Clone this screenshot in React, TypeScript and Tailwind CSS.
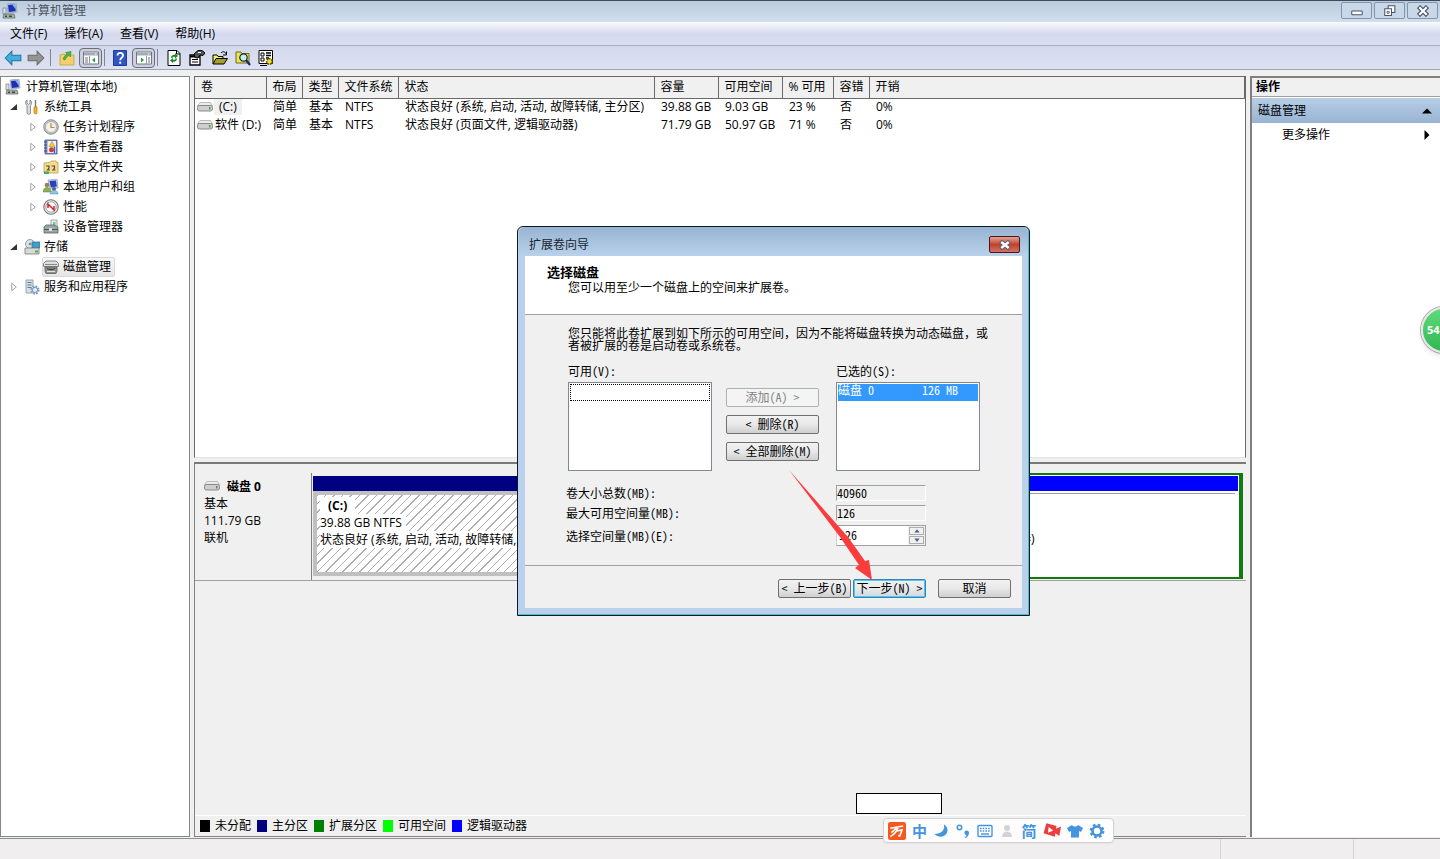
import { useState } from "react"
import type { ReactNode } from "react"

const Svg = ({ children, className = "size-4" }: { children: ReactNode, className?: string }) => (
  <svg viewBox="0 0 16 16" className={`shrink-0 ${className}`} aria-hidden="true">{children}</svg>
)

const ComputerIcon = () => (
  <Svg>
    <path d="M5 1l9-1 1 9-9 1z" fill="#c8d0dc" stroke="#8792a5" strokeWidth=".6" />
    <path d="M6 2l7-.8.8 7-7 .8z" fill="#1b2fb8" />
    <path d="M10 1.6l3-.3.7 5z" fill="#8fb4f4" />
    <path d="M1 5h3v6H1z" fill="#dfe4e8" stroke="#6b7680" strokeWidth=".7" />
    <path d="M2 11h10l1 4H1z" fill="#a9b4ae" stroke="#59635e" strokeWidth=".7" />
    <path d="M3 12.5h2v1.5H3zM7 12.5h3v1.5H7z" fill="#3f4a46" />
  </Svg>
)

const ToolsIcon = () => (
  <Svg>
    <path d="M3 1v3l1.5 1.5L6 4V1c2 1 2 4 .5 5.5V14a1.8 1.8 0 01-3.5 0V6.500C1 5 1 2 3 1z" fill="#d9dde0" stroke="#737a80" strokeWidth=".8" />
    <path d="M11.500 1v7" stroke="#777" strokeWidth="1.400" />
    <path d="M10 8h3v5.500a1.500 1.500 0 01-3 0z" fill="#f2b417" stroke="#b87f0a" strokeWidth=".7" />
  </Svg>
)

const ClockIcon = () => (
  <Svg>
    <circle cx="8" cy="8" r="7.300" fill="#bfc3c8" stroke="#7b7f85" strokeWidth=".8" />
    <circle cx="8" cy="8" r="5.500" fill="#f3f1e4" stroke="#9a9a94" strokeWidth=".6" />
    <path d="M8 4v4.500h3.500" stroke="#b08a50" strokeWidth="1.200" fill="none" />
  </Svg>
)

const EventIcon = () => (
  <Svg>
    <path d="M2 1h12v14H2z" fill="#7f90c4" stroke="#4b5788" strokeWidth=".8" />
    <path d="M4.500 2H13v12H4.500z" fill="#eef0fa" />
    <path d="M1 3h3M1 6h3M1 9h3M1 12h3" stroke="#444f78" />
    <path d="M9 2.500l3 5H6z" fill="#f5d31b" stroke="#a5860c" strokeWidth=".5" />
    <circle cx="8.500" cy="10.800" r="2.500" fill="#d33a3f" />
    <path d="M11.500 8v6" stroke="#4766bd" strokeWidth="1.500" />
  </Svg>
)

const SharedIcon = () => (
  <Svg>
    <path d="M1 4l6-.5L8 2h5l.5 1.500H15V14H1z" fill="#f6dc90" stroke="#c49a3d" strokeWidth=".8" />
    <path d="M3 7h3v2L4.500 11H7M8.500 7h3v2L10 11h2.500" fill="none" stroke="#4f4e38" strokeWidth="1.200" />
    <path d="M1 12.500h5V15H1z" fill="#48a85b" />
  </Svg>
)

const UsersIcon = () => (
  <Svg>
    <path d="M5 1l9-1 1 9-8 1z" fill="#cfd6e4" stroke="#8490ab" strokeWidth=".6" />
    <path d="M6.500 2l6.500-.5.8 6-6 1z" fill="#2540c0" />
    <circle cx="4" cy="6" r="2.300" fill="#9d8353" />
    <path d="M0 13c0-6 8-6 8 0z" fill="#8fae4f" stroke="#61793a" strokeWidth=".5" />
    <circle cx="11" cy="10" r="2" fill="#55627a" />
    <path d="M7 15c0-5 8-5 8 0z" fill="#8cc4e4" stroke="#5a8eaf" strokeWidth=".5" />
  </Svg>
)

const PerfIcon = () => (
  <Svg>
    <circle cx="8" cy="8" r="7.200" fill="#e9e9e9" stroke="#77797b" strokeWidth="1.100" />
    <circle cx="8" cy="8" r="5.200" fill="#fff" stroke="#8b8b8b" strokeWidth=".8" />
    <path d="M5 9V5l6 6V7" stroke="#d0202a" strokeWidth="1.500" fill="none" />
  </Svg>
)

const DeviceIcon = () => (
  <Svg>
    <path d="M8 1h6v8H8z" fill="#eef3ee" stroke="#7c857f" strokeWidth=".7" />
    <path d="M10 3h2.500v4H10z" fill="#7cc08a" />
    <path d="M1 8l2-2h8l4 2v6H1z" fill="#9aa5a6" stroke="#5b6667" strokeWidth=".8" />
    <path d="M1 10.500h14" stroke="#4f595a" />
    <path d="M6 9h3v3H6z" fill="#dce2e2" />
  </Svg>
)

const StorageIcon = () => (
  <Svg>
    <circle cx="6" cy="5" r="4.500" fill="#d8e3e6" stroke="#7e8c90" strokeWidth=".8" />
    <circle cx="6" cy="5" r="1.300" fill="#7e8c90" />
    <path d="M8 3h8v6H8z" fill="#3e9fcf" stroke="#2f6d8e" strokeWidth=".7" />
    <path d="M1 9h14v6H1z" fill="#d9d9d6" stroke="#777" strokeWidth=".8" />
    <path d="M11 11.500h3v2h-3z" fill="#46a95a" />
  </Svg>
)

const DiskMgmtIcon = () => (
  <Svg>
    <path d="M3 2h10l2.500 2.500v3H.5v-3z" fill="#dedede" stroke="#6c6c6c" strokeWidth=".8" />
    <path d="M2 8h12v4l-1 2.500H3L2 12z" fill="#8f918d" stroke="#5d5f5c" strokeWidth=".8" />
    <path d="M2 5.500h12" stroke="#8a8a8a" />
    <path d="M4 9.500c3 1.500 5 1.500 8 0" stroke="#3f413f" strokeWidth="1.300" fill="none" />
    <path d="M4 12.500h8" stroke="#e2e2e2" />
  </Svg>
)

const ServicesIcon = () => (
  <Svg>
    <path d="M2 1h7v13H2z" fill="#d6e0e8" stroke="#8294a4" strokeWidth=".8" />
    <path d="M3.500 3.500h4M3.500 6h4M3.500 8.500h4" stroke="#60788c" />
    <circle cx="11" cy="11" r="3.400" fill="#e6edf5" stroke="#7d9cbe" strokeWidth="2.400" strokeDasharray="1.600 1.070" />
    <circle cx="11" cy="11" r="2.600" fill="none" stroke="#7d9cbe" />
  </Svg>
)

const DriveIcon = () => (
  <Svg>
    <path d="M3 3.500h10.500L15.500 7H.500z" fill="#ececec" stroke="#a5a5a5" strokeWidth=".7" />
    <rect x=".5" y="6.500" width="15" height="5.500" rx="2" fill="#cfcfcf" stroke="#7f7f7f" strokeWidth=".9" />
    <path d="M12 8h1.500v2.500H12z" fill="#3e9e46" />
  </Svg>
)

const Expander = ({ open }: { open?: boolean }) => (
  <Svg className="size-3">
    {open ? <path d="M12 4v8H3z" fill="#333" /> : <path d="M5 3l6 5-6 5z" fill="#fff" stroke="#999" strokeWidth="1.200" />}
  </Svg>
)

const tree = [
  { label: "系统工具", level: 1, open: true, icon: <ToolsIcon /> },
  { label: "任务计划程序", level: 2, open: false, icon: <ClockIcon /> },
  { label: "事件查看器", level: 2, open: false, icon: <EventIcon /> },
  { label: "共享文件夹", level: 2, open: false, icon: <SharedIcon /> },
  { label: "本地用户和组", level: 2, open: false, icon: <UsersIcon /> },
  { label: "性能", level: 2, open: false, icon: <PerfIcon /> },
  { label: "设备管理器", level: 2, icon: <DeviceIcon /> },
  { label: "存储", level: 1, open: true, icon: <StorageIcon /> },
  { label: "磁盘管理", level: 2, icon: <DiskMgmtIcon />, selected: true },
  { label: "服务和应用程序", level: 1, open: false, icon: <ServicesIcon /> },
]

const columns = ["卷", "布局", "类型", "文件系统", "状态", "容量", "可用空间", "% 可用", "容错", "开销"]

const volumes = [
  ["(C:)", "简单", "基本", "NTFS", "状态良好 (系统, 启动, 活动, 故障转储, 主分区)", "39.88 GB", "9.03 GB", "23 %", "否", "0%"],
  ["软件 (D:)", "简单", "基本", "NTFS", "状态良好 (页面文件, 逻辑驱动器)", "71.79 GB", "50.97 GB", "71 %", "否", "0%"],
]

const legend = [
  { label: "未分配", color: "bg-black" },
  { label: "主分区", color: "bg-[#000080]" },
  { label: "扩展分区", color: "bg-[#008000]" },
  { label: "可用空间", color: "bg-[#00ff00]" },
  { label: "逻辑驱动器", color: "bg-[#0000ff]" },
]

const TitleBar = () => (
  <header className="flex h-[22px] items-start justify-between border-t border-[#3c4a5c] bg-linear-to-b from-[#bccbdc] to-[#d0dfec] pl-0.5">
    <div className="flex items-center gap-2 pt-0.5">
      <ComputerIcon />
      <h1 className="text-xs text-[#4a5260]">计算机管理</h1>
    </div>
    <div className="flex gap-0.5 pt-px pr-0.5">
      <button aria-label="最小化" className="flex h-[17px] w-[31px] items-center justify-center rounded-xs border border-[#8394ac] bg-[#c9d8e8]">
        <Svg className="size-3"><rect x="1" y="8" width="14" height="5" rx="1" fill="#fff" stroke="#4b5566" strokeWidth="1.400" /></Svg>
      </button>
      <button aria-label="还原" className="flex h-[17px] w-[31px] items-center justify-center rounded-xs border border-[#8394ac] bg-[#c9d8e8]">
        <Svg className="size-3"><path d="M5.500 1h9v9h-9z" fill="#fff" stroke="#4b5566" strokeWidth="1.400" /><path d="M1 5h9v9H1z" fill="#fff" stroke="#4b5566" strokeWidth="1.400" /><path d="M4 8.500h3V11H4z" fill="#c9d8e8" stroke="#4b5566" /></Svg>
      </button>
      <button aria-label="关闭" className="flex h-[17px] w-[31px] items-center justify-center rounded-xs border border-[#8394ac] bg-[#c9d8e8]">
        <Svg className="size-3"><path d="M2 2l12 12M14 2L2 14" stroke="#4b5566" strokeWidth="6" /><path d="M3 3l10 10M13 3L3 13" stroke="#fff" strokeWidth="3" /></Svg>
      </button>
    </div>
  </header>
)

const Separator = () => <span className="h-[17px] w-px bg-[#7f8794]"></span>

const PanelIcon = ({ flip }: { flip?: boolean }) => (
  <Svg>
    <path d="M.5 2h15v12H.500z" fill="#fff" stroke="#6f7782" />
    <path d="M1 3h14v2.500H1z" fill="#a2abb8" />
    <path d="M12 4h1.500" stroke="#fff" />
    <path d={flip ? "M10.500 6v8" : "M6.500 6v8"} stroke="#8f98a4" />
    <path d={flip ? "M12 8h2M12 10h2M12 12h2" : "M2 8h3M2 10h3M2 12h3"} stroke="#6f7782" />
    <path d={flip ? "M5 7.500l3 2.500-3 2.500z" : "M12 7.500L9 10l3 2.500z"} fill="#2f9e3a" />
  </Svg>
)

const Toolbar = () => (
  <div className="flex h-6 items-center border-b border-[#9fa5b8] bg-linear-to-b from-[#d3d9ec] to-[#dde1f2] pl-1">
    <button aria-label="后退" className="mr-[5px]"><Svg className="size-[18px]"><path d="M1 8l6-6v3.500h8v5H7V14z" fill="#42aee0" stroke="#23719f" strokeWidth=".9" /></Svg></button>
    <button aria-label="前进" className="mr-[5px]"><Svg className="size-[18px]"><path d="M15 8L9 2v3.500H1v5h8V14z" fill="#949494" stroke="#686868" strokeWidth=".9" /></Svg></button>
    <Separator />
    <button aria-label="向上" className="mr-1 ml-2">
      <Svg><path d="M1 5l4-1 1 1h9v10H1z" fill="#f3d06b" stroke="#cb9f3b" strokeWidth=".8" /><path d="M4 9c1-2 2-4 4-5L6.500 2.500 12 1.500 11.500 7 10 5.500C8 6.500 7 8 6 10z" fill="#55b33d" stroke="#35822a" strokeWidth=".6" /></Svg>
    </button>
    <button aria-label="显示/隐藏控制台树" className="mr-0.5 flex h-5 w-[23px] items-center justify-center rounded-sm border border-[#6a6f7b] bg-[#cdd0dc]"><PanelIcon /></button>
    <Separator />
    <button aria-label="帮助" className="mr-1 ml-[7px]">
      <Svg><path d="M1.500 .5h13v15h-13z" fill="#2f55c5" stroke="#1f3d96" /><path d="M5.500 5.500c0-3.500 5.500-3.500 5.500 0C11 8 8.200 7.500 8.200 10.200" stroke="#fff" strokeWidth="1.800" fill="none" /><path d="M7.200 11.700h2v2h-2z" fill="#fff" /></Svg>
    </button>
    <button aria-label="显示/隐藏操作窗格" className="mr-0.5 flex h-5 w-[23px] items-center justify-center rounded-sm border border-[#6a6f7b] bg-[#cdd0dc]"><PanelIcon flip /></button>
    <Separator />
    <div className="ml-2 flex gap-[7px]">
      <button aria-label="刷新">
        <Svg><path d="M2 .5h9L14 3.500v12H2z" fill="#fff" stroke="#000" /><path d="M10.500 .5v3.500H14" stroke="#000" fill="none" /><path d="M5 8c0-3 3-3.500 4-3V3l3 3-3 2.500V7C7.500 6.500 6.500 7 6.500 8zM11 8.500c0 3-3 3.500-4 3V13l-3-2.500L7 8v1.800c1.500.2 2.500 0 2.500-1.300z" fill="#128a22" /></Svg>
      </button>
      <button aria-label="属性">
        <Svg><path d="M1 5h10v10H1z" fill="#fff" stroke="#000" strokeWidth="1.300" /><path d="M1 6.500h10" stroke="#000" strokeWidth="2" /><path d="M3 9.500h6M3 12h6" stroke="#000" /><path d="M5 4l4-3.500h4l3 2.500-2 2.500-3-.5-2 3-3-.5z" fill="#555" stroke="#000" /><path d="M9 2.500h3" stroke="#fff" /></Svg>
      </button>
      <button aria-label="打开">
        <Svg><path d="M1 14V5h4l1 1.500h5V9" fill="#f7ee6a" stroke="#000" /><path d="M1 14l3-5.500h11.500L12 14z" fill="#a39f2c" stroke="#000" /><path d="M9 3c2-2 4-1.500 5 1M14.500 1.500V5H11" stroke="#000" fill="none" /></Svg>
      </button>
      <button aria-label="查找">
        <Svg><path d="M1 2h5l1 1.500h7V13H1z" fill="#ece552" stroke="#6f6a14" /><circle cx="8.500" cy="7.500" r="3.700" fill="#bdf1f5" stroke="#222" strokeWidth="1.200" /><path d="M11 10l4 5" stroke="#17247d" strokeWidth="2.200" /></Svg>
      </button>
      <button aria-label="设置">
        <Svg><path d="M1 .5h13.500v13H1z" fill="#fff" stroke="#000" /><path d="M3 3h3v3H3zM3 8h3v3H3z" fill="#fff" stroke="#000" /><path d="M8 3h5M8 5.500h5M8 8h3" stroke="#000" strokeWidth="1.300" /><circle cx="11.500" cy="11.500" r="2.600" fill="#e8d71f" stroke="#5d5500" strokeWidth="2" strokeDasharray="1.500 .8" /><circle cx="11.500" cy="11.500" r="2" fill="#f3e22e" /><path d="M2 15.500h7" stroke="#000" /></Svg>
      </button>
    </div>
  </div>
)

const Tree = () => (
  <nav className="w-[190px] shrink-0 border border-[#828790] bg-white pl-1">
    <button className="flex h-5 items-center gap-[5px]"><ComputerIcon />计算机管理(本地)</button>
    <ul>
      {tree.map((item) => (
        <li key={item.label} className={`flex h-5 items-center ${item.level === 2 ? "pl-[22px]" : "pl-[3px]"}`}>
          <span className="w-[15px]">{item.open !== undefined && <Expander open={item.open} />}</span>
          <button className={`flex h-5 items-center gap-1 rounded-xs border pr-[3px] ${item.selected ? "border-[#d9d9d9] bg-linear-to-b from-[#f8f8f8] to-[#e5e5e5]" : "border-transparent"}`}>
            {item.icon}{item.label}
          </button>
        </li>
      ))}
    </ul>
  </nav>
)

const VolumeTable = () => (
  <div className="min-h-0 flex-[390] border-b-2 border-[#7a7a7a] bg-[#f0f0f0] pb-1">
    <div className="h-full border border-[#696969] border-b-[#e3e3e3] bg-white">
      <table className="w-full table-fixed border-collapse text-left whitespace-nowrap">
        <colgroup>
          <col className="w-[71px]" />
          <col className="w-9" />
          <col className="w-9" />
          <col className="w-[60px]" />
          <col className="w-64" />
          <col className="w-16" />
          <col className="w-16" />
          <col className="w-[51px]" />
          <col className="w-9" />
          <col />
        </colgroup>
        <thead>
          <tr className="h-[21px] bg-[#f0f0f0]">
            {columns.map((c) => (
              <th key={c} className="border-r border-b border-[#696969] p-0 pl-[6px] font-normal">{c}</th>
            ))}
          </tr>
        </thead>
        <tbody>
          {volumes.map((row, i) => (
            <tr key={row[0]} className="h-[18px]">
              {row.map((cell, j) => (
                <td key={j} className={`p-0 ${j === 0 ? "pl-0.5" : "pl-[7px]"}`}>
                  {j === 0 ? (
                    <span className="flex items-center gap-px">
                      <DriveIcon />
                      <span className={i === 0 ? "bg-[#f0f0f0] px-[5px]" : "pl-px"}>{cell}</span>
                    </span>
                  ) : cell}
                </td>
              ))}
            </tr>
          ))}
        </tbody>
      </table>
    </div>
  </div>
)

const DiskPane = () => (
  <div className="flex min-h-0 flex-[371] flex-col border-b border-l border-[#828282] pt-[9px]">
    <div className="flex h-[108px] border-b border-[#a0a0a0] pr-[3px]">
      <div className="w-[117px] shrink-0 border-r border-[#808080] pt-[5px] pl-[9px] leading-[17px]">
        <p className="flex items-center gap-[7px] font-bold"><DriveIcon />磁盘 0</p>
        <p>基本</p>
        <p>111.79 GB</p>
        <p>联机</p>
      </div>
      <div className="flex flex-[542] flex-col px-px pt-[3px] pb-1">
        <div className="h-[15px] bg-[#000080]"></div>
        <div className="flex-1 border-4 border-[#c0c0c0] bg-[repeating-linear-gradient(135deg,#b0b0b0_0_1px,#fff_1px_6px)] pt-0.5 pl-[3px] leading-[17px]">
          <p><span className="bg-white px-2 font-bold">(C:)</span></p>
          <p><span className="bg-white pr-1">39.88 GB NTFS</span></p>
          <p><span className="bg-white">{volumes[0][4]}</span></p>
        </div>
      </div>
      <div className="mb-px flex flex-[384] flex-col border-2 border-r-4 border-[#107c10] bg-white p-px">
        <div className="h-[15px] bg-[#0000ff]"></div>
        <div className="mt-0.5 mr-[3px] flex-1 border-t border-[#a0a0a0] pt-0.5 pl-1.5 leading-[17px]">
          <p className="pl-2 font-bold">软件 (D:)</p>
          <p>71.79 GB NTFS</p>
          <p>{volumes[1][4]}</p>
        </div>
      </div>
    </div>
    <ul className="mt-auto flex h-[21px] items-center gap-[6px] border-t border-white pl-[5px]">
      {legend.map((l) => (
        <li key={l.label} className="flex items-center gap-[5px]">
          <span className={`h-3 w-[10px] ${l.color}`}></span>{l.label}
        </li>
      ))}
    </ul>
  </div>
)

const Actions = () => (
  <aside className="w-[190px] shrink-0 border-t-2 border-l-2 border-[#808080] bg-white">
    <h2 className="flex h-[19px] items-center border-b border-[#a0a0a0] bg-[#f0f0f0] pl-1 font-bold">操作</h2>
    <button className="flex h-[26px] w-full items-center justify-between border-t border-white bg-linear-to-b from-[#b7cde6] to-[#98b4d3] pr-2 pl-1.5">
      磁盘管理<Svg className="size-[10px]"><path d="M8 4l8 8H0z" fill="#000" /></Svg>
    </button>
    <button className="flex h-6 w-full items-center justify-between pr-2 pl-[30px]">
      更多操作<Svg className="size-[10px]"><path d="M4 0l8 8-8 8z" fill="#000" /></Svg>
    </button>
  </aside>
)

const buttonStyle = "flex h-[19px] items-center justify-center whitespace-pre rounded-xs border pb-0.5"
const normal = "border-[#707070] bg-linear-to-b from-[#f2f2f2] via-[#e8e8e8] to-[#cfcfcf]"

const Wizard = () => {
  const [size, setSize] = useState(126)

  return (
    <section role="dialog" aria-labelledby="wizard-title" className="absolute top-[226px] left-[517px] w-[513px] rounded-t-md border border-[#0d1a26] bg-[#b9d1ea] px-[7px] pb-[7px] font-['Noto_Sans_Mono_CJK_SC','Noto_Sans_CJK_SC',monospace] text-xs leading-3 text-black shadow-[inset_-1px_-1px_0_#3fc1d0]">
      <div className="-mx-[6px] flex h-[29px] items-center justify-between rounded-t-md bg-linear-to-b from-[#98b4d2] to-[#b9d1ea] pt-1.5 pr-2 pl-[10px]">
        <h2 id="wizard-title" className="font-['Open_Sans','Noto_Sans_CJK_SC',sans-serif] text-[#1a2430]">扩展卷向导</h2>
        <button aria-label="关闭" className="flex h-[17px] w-[31px] items-center justify-center rounded-xs border border-[#4a1a1a] bg-linear-to-b from-[#e0a298] via-[#c0402c] to-[#cf7260]">
          <Svg className="size-3"><path d="M2 3l12 10M14 3L2 13" stroke="#555e70" strokeWidth="5.500" /><path d="M3 4l10 8M13 4L3 12" stroke="#fff" strokeWidth="3.200" /></Svg>
        </button>
      </div>
      <div className="bg-[#f0f0f0]">
        <div className="h-[59px] border-b border-[#a0a0a0] bg-white pt-2 pl-[22px]">
          <h3 className="text-[13px] leading-4 font-bold">选择磁盘</h3>
          <p className="pt-px pl-[21px]">您可以用至少一个磁盘上的空间来扩展卷。</p>
        </div>
        <div className="h-[251px] border-b border-[#a0a0a0] pt-3 pl-[43px]">
          <p className="w-[424px]">您只能将此卷扩展到如下所示的可用空间，因为不能将磁盘转换为动态磁盘，或者被扩展的卷是启动卷或系统卷。</p>
          <div className="mt-[14px] flex gap-[14px]">
            <div className="w-36">
              <p id="available">可用(V):</p>
              <ul role="listbox" aria-labelledby="available" className="mt-[5px] h-[89px] border border-[#828790] bg-white p-px">
                <li className="h-[17px] border border-dotted border-black"></li>
              </ul>
            </div>
            <div className="flex w-[93px] flex-col gap-2 pt-[23px]">
              <button disabled className={`${buttonStyle} border-[#adb2b5] bg-[#f4f4f4] text-[#838383]`}>{"添加(A) >"}</button>
              <button className={`${buttonStyle} ${normal}`}>{"< 删除(R)"}</button>
              <button className={`${buttonStyle} ${normal}`}>{"< 全部删除(M)"}</button>
            </div>
            <div className="ml-[3px] w-36">
              <p id="selected">已选的(S):</p>
              <ul role="listbox" aria-labelledby="selected" className="mt-[5px] h-[89px] border border-[#828790] bg-white p-px">
                <li role="option" aria-selected="true" className="flex h-[17px] bg-[#3399ff] text-white"><span className="w-[84px]">磁盘 0</span>126 MB</li>
              </ul>
            </div>
          </div>
          <div className="-ml-0.5 mt-[14px] grid grid-cols-[270px_90px] items-center gap-y-1">
            <label htmlFor="total">卷大小总数(MB):</label>
            <input id="total" readOnly value="40960" className="h-4 w-full border border-[#a0a0a0] border-r-white border-b-white bg-[#f0f0f0] pb-px" />
            <label htmlFor="max">最大可用空间量(MB):</label>
            <input id="max" readOnly value="126" className="h-4 w-full border border-[#a0a0a0] border-r-white border-b-white bg-[#f0f0f0] pb-px" />
            <label htmlFor="amount">选择空间量(MB)(E):</label>
            <div className="flex h-[21px] border border-[#a0a0a0] border-l-[#d0d0d0] bg-white">
              <input id="amount" value={size} onChange={(e) => setSize(Number(e.target.value))} className="w-0 flex-1 pb-0.5 pl-0.5" />
              <div className="flex w-[17px] flex-col gap-px bg-[#f0f0f0] p-px">
                <button aria-label="增加" onClick={() => setSize(size + 1)} className="flex flex-1 items-center justify-center border border-[#abadb3]"><Svg className="size-[6px]"><path d="M8 3l7 9H1z" fill="#4d6185" /></Svg></button>
                <button aria-label="减少" onClick={() => setSize(size - 1)} className="flex flex-1 items-center justify-center border border-[#abadb3]"><Svg className="size-[6px]"><path d="M8 13L1 4h14z" fill="#4d6185" /></Svg></button>
              </div>
            </div>
          </div>
        </div>
        <div className="flex h-[42px] justify-end gap-0.5 pt-[13px] pr-[11px]">
          <button className={`${buttonStyle} ${normal} w-[73px]`}>{"< 上一步(B)"}</button>
          <button className={`${buttonStyle} w-[73px] border-[#3c7fb1] bg-linear-to-b from-[#f2f2f2] via-[#e8e8e8] to-[#cfdbe2] shadow-[inset_0_0_0_1px_#45cdf5]`}>{"下一步(N) >"}</button>
          <button className={`${buttonStyle} ${normal} ml-[10px] w-[73px]`}>取消</button>
        </div>
      </div>
      <svg viewBox="0 0 84 112" className="pointer-events-none absolute top-[243px] left-[271px] h-28 w-[84px]" aria-hidden="true">
        <path d="M0 0L59 67 76 91 80 90 83 110 66 98 70 95 51 67z" fill="#fb3c3c" />
      </svg>
    </section>
  )
}

const ImeBar = () => (
  <div className="absolute top-[818px] left-[883px] flex h-[25px] w-[231px] items-center justify-between rounded-sm border border-[#d2d2d2] bg-[#fdfdfd] pr-2 pl-1 text-[#4494de] shadow-xs">
    <Svg className="size-[18px]"><rect width="16" height="16" rx="2" fill="#f5591e" /><path d="M2 5.500l11.500-2M9 4.500C8 8 5 11.500 2 13M7.500 8l5-1-2 5.500-1.500-.5M8 5L3 9.500" stroke="#fff" strokeWidth="1.400" fill="none" /></Svg>
    <button className="text-[15px] font-bold">中</button>
    <Svg><path d="M11 1.500c1 6-3 9.500-9.500 9.500 5 5 13 2.500 13-4 0-2.500-1.500-4.500-3.500-5.500z" fill="#4494de" /></Svg>
    <Svg><circle cx="4.500" cy="4.500" r="2.200" fill="none" stroke="#4494de" strokeWidth="1.500" /><path d="M9.500 14c2-.5 2-1.500 2-2a2.300 2.300 0 112.500-2.500C14 12 13 14 10.500 15z" fill="#4494de" /></Svg>
    <Svg><rect x="1" y="2.500" width="14" height="11" rx="1" fill="#fff" stroke="#4494de" strokeWidth="1.400" /><path d="M3 5.500h10M3 8h10" stroke="#4494de" strokeWidth="1.500" strokeDasharray="1.600 1.100" /><path d="M4 11h8" stroke="#4494de" strokeWidth="1.400" /></Svg>
    <Svg><circle cx="8" cy="5" r="3" fill="#d3d3d3" /><path d="M3 14c0-7 10-7 10 0z" fill="#d3d3d3" /></Svg>
    <button className="text-[15px] font-bold">简</button>
    <Svg className="size-[18px]"><path d="M3 1l9 2.500-.5 2.500L16 4l-1.500 8.500-3.500-2.500-.5 3L.5 10z" fill="#ec3e3e" /><path d="M5 4.500l4 3-4.500 2z" fill="#fff" /></Svg>
    <Svg><path d="M5 2c1.500 2 4.500 2 6 0l5 3-2 4-2-1v6.500H4V8L2 9 0 5z" fill="#4494de" /></Svg>
    <Svg><circle cx="8" cy="8" r="6.300" fill="none" stroke="#4494de" strokeWidth="2.200" strokeDasharray="2.600 2.350" /><circle cx="8" cy="8" r="4.500" fill="none" stroke="#4494de" strokeWidth="2.600" /></Svg>
  </div>
)

const App = () => (
  <div className="relative flex h-screen flex-col overflow-hidden bg-[#f0f0f0] font-['Open_Sans','Noto_Sans_CJK_SC',sans-serif] text-xs text-black">
    <TitleBar />
    <nav className="flex h-6 items-center gap-[17px] border-b border-[#a9afc2] bg-linear-to-b from-[#fafbfe] via-[#d5daee] to-[#d8ddf0] pl-[10px]">
      {["文件(F)", "操作(A)", "查看(V)", "帮助(H)"].map((m) => <button key={m}>{m}</button>)}
    </nav>
    <Toolbar />
    <main className="flex min-h-0 flex-1 gap-1 pt-1.5">
      <Tree />
      <div className="flex min-w-0 flex-1 flex-col">
        <VolumeTable />
        <DiskPane />
      </div>
      <Actions />
    </main>
    <footer className="mt-px flex h-[21px] justify-end border-t border-[#909090] bg-[#f0eeee]">
      <span className="w-[133px] border-l border-[#d5d5d5]"></span>
      <span className="w-[87px] border-l border-[#d5d5d5]"></span>
    </footer>
    <Wizard />
    <div className="absolute top-[793px] left-[856px] h-[21px] w-[86px] border border-black bg-white"></div>
    <ImeBar />
    <div className="absolute top-[307px] -right-[27px] flex size-[46px] items-center rounded-full border-2 border-[#e6e6e6] bg-linear-to-b from-[#5fdb7c] to-[#2fb752] pl-1 text-[11px] font-bold text-white shadow-md ring-1 ring-[#a8a8a8]">54</div>
  </div>
)

export default App
